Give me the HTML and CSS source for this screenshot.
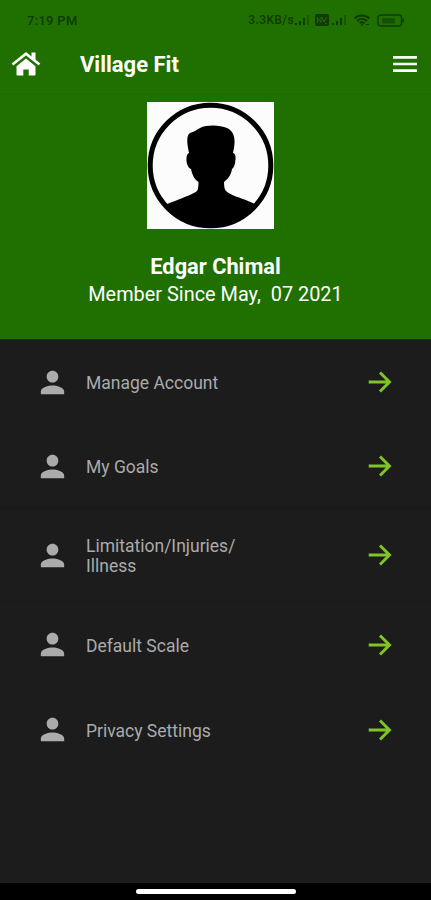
FILE: index.html
```html
<!DOCTYPE html>
<html lang="en">

<head>
    <meta charset="UTF-8">
    <meta name="viewport" content="width=device-width, initial-scale=1.0">
    <title>Village Fit</title>
    <link rel="stylesheet" href="styles.css">
</head>

<body>
    <!-- Shared icons -->
    <svg class="sprite" width="0" height="0">
        <symbol id="person" viewBox="0 0 24 24">
            <path d="M12 12c2.21 0 4-1.79 4-4s-1.79-4-4-4-4 1.79-4 4 1.79 4 4 4zm0 2c-2.67 0-8 1.34-8 4v2h16v-2c0-2.66-5.33-4-8-4z"/>
        </symbol>
        <symbol id="arrow" viewBox="0 0 24 24">
            <path d="M4 12h14.500M12 5.300l6.700 6.700-6.700 6.700" fill="none" stroke="currentColor" stroke-width="2.100"/>
        </symbol>
        <symbol id="signal" viewBox="0 0 16 12">
            <path d="M1 9h2v2H1zM5 7h2v4H5zM9 4h2v7H9z"/>
            <path d="M13 1h2v10h-2z" opacity="0.45"/>
        </symbol>
    </svg>

    <div class="screen">
        <header class="top">
            <div class="status">
                <span class="time">7:19 PM</span>
                <div class="status-icons">
                    <span class="speed">3.3KB/s</span>
                    <svg class="signal" width="16" height="12"><use href="#signal"/></svg>
                    <svg class="volte" width="14" height="12" viewBox="0 0 14 12">
                        <rect width="14" height="12" rx="2" fill="currentColor"/>
                        <path d="M2.500 9V3.500L6 8.500V3M7 3l2 5 2.500-5M10 9.500h2" fill="none" stroke="#1f7000" stroke-width="1"/>
                    </svg>
                    <svg class="signal two" width="16" height="12"><use href="#signal"/></svg>
                    <svg class="wifi" width="18" height="13" viewBox="0 0 18 13" stroke="currentColor" stroke-width="1.900">
                        <path d="M1.500 4.500c4-4 11-4 15 0M4 7c3-2.700 7-2.700 10 0M6.500 9.300c1.500-1.300 3.500-1.300 5 0"/>
                        <path d="M7.500 10.300h3L9 12.300z" fill="currentColor" stroke="none"/>
                        <path d="M13 10.500h3" stroke-width="1"/>
                    </svg>
                    <svg class="battery" width="28" height="13" viewBox="0 0 28 13">
                        <rect x="1" y="1" width="23.500" height="11" rx="2.500" fill="none" stroke="currentColor" stroke-width="1.300"/>
                        <rect x="5" y="4" width="13" height="5.500" opacity="0.6"/>
                        <path d="M25.500 4.500h1.500v4h-1.500z"/>
                    </svg>
                </div>
            </div>

            <nav class="navbar">
                <svg class="home" width="30" height="26" viewBox="0 0 30 26">
                    <path d="M15 7.500L5.500 15.200V23.500c0 .6.400 1 1 1H12.300v-6h5.400v6H23.500c.6 0 1-.4 1-1v-8.300z"/>
                    <path d="M1.500 13.500L15 2.700l13.500 10.800" fill="none" stroke="currentColor" stroke-width="2.700"/>
                    <path d="M20.500 1.500h4v9l-4-3.200z"/>
                </svg>
                <h1>Village Fit</h1>
                <svg class="menu" width="32" height="32" viewBox="0 0 24 24">
                    <path d="M3 18h18v-2H3v2zm0-5h18v-2H3v2zm0-7v2h18V6H3z"/>
                </svg>
            </nav>

            <div class="profile">
                <svg class="avatar" width="127" height="127" viewBox="0 0 127 127">
                    <defs>
                        <clipPath id="ring"><circle cx="63.500" cy="63.500" r="62"/></clipPath>
                    </defs>
                    <rect width="127" height="127" fill="#fcfcfc"/>
                    <g clip-path="url(#ring)" fill="#000">
                        <path d="M0 127V111C15 104 20 102 28 99C38 95 46 92 50 89Q51.500 87 51.500 80C47 77 45 72 44 67C41 66 39 61 39.500 56Q39.500 52 42 51C40 41 39 34 43 31C47 30 49 28 53 26C60 22.500 73 23 80 26C88 30 89 38 86 51Q89 52 88.500 57Q88 65 85 67C84 73 81 77 77 80Q77 87 79 89C83 93 94 96 101 99C110 103 117 106 127 111V127z"/>
                    </g>
                    <circle cx="63.500" cy="63.500" r="60.300" fill="none" stroke="#000" stroke-width="5"/>
                </svg>
                <h2>Edgar Chimal</h2>
                <p>Member Since May,&nbsp; 07 2021</p>
            </div>
        </header>

        <main class="options">
            <div class="option">
                <svg class="person"><use href="#person"/></svg>
                <span class="label">Manage Account</span>
                <svg class="arrow"><use href="#arrow"/></svg>
            </div>
            <div class="option">
                <svg class="person"><use href="#person"/></svg>
                <span class="label">My Goals</span>
                <svg class="arrow"><use href="#arrow"/></svg>
            </div>
            <div class="option tall">
                <svg class="person"><use href="#person"/></svg>
                <span class="label">Limitation/Injuries/<br>Illness</span>
                <svg class="arrow"><use href="#arrow"/></svg>
            </div>
            <div class="option">
                <svg class="person"><use href="#person"/></svg>
                <span class="label">Default Scale</span>
                <svg class="arrow"><use href="#arrow"/></svg>
            </div>
            <div class="option">
                <svg class="person"><use href="#person"/></svg>
                <span class="label">Privacy Settings</span>
                <svg class="arrow"><use href="#arrow"/></svg>
            </div>
        </main>

        <footer class="gesture">
            <div class="pill"></div>
        </footer>
    </div>
</body>

</html>
```
FILE: styles.css
```css
* {
    box-sizing: border-box;
}

body {
    margin: 0;
    font-family: Roboto, sans-serif;
    background-color: #1c1c1c;
}

h1, h2, p {
    margin: 0;
}

svg {
    display: block;
    flex-shrink: 0;
    fill: currentColor;
}

.sprite {
    position: absolute;
}

.screen {
    height: 900px;
    display: flex;
    flex-direction: column;
    overflow: hidden;
}

.top {
    height: 340px;
    background-color: #1f7000;
    border-bottom: 1px solid #16330a;
    color: #fff;
}

/* Status bar */
.status {
    height: 40px;
    padding: 0 26px 0 27px;
    display: flex;
    justify-content: space-between;
    align-items: center;
    color: #113a06;
}

.time {
    font-size: 13px;
    font-weight: 500;
    letter-spacing: 0.3px;
}

.status-icons {
    display: flex;
    align-items: center;
}

.speed {
    font-size: 12px;
    font-weight: 500;
    letter-spacing: 0.4px;
}

.volte {
    margin-left: 5px;
}

.signal.two {
    margin-left: 2px;
}

.wifi {
    margin-left: 6px;
    fill: none;
}

.battery {
    margin-left: 6px;
}

/* App bar */
.navbar {
    height: 54px;
    padding: 0 10px 6px 11px;
    display: flex;
    align-items: center;
    border-bottom: 1px solid #1d6902;
}

.navbar h1 {
    flex: 1;
    margin-left: 39px;
    padding-top: 2px;
    font-size: 22px;
    font-weight: 700;
}

.profile {
    padding: 8px 11px 0 0;
    display: flex;
    flex-direction: column;
    align-items: center;
}

.profile h2 {
    margin-top: 24px;
    padding-left: 11px;
    font-size: 21.8px;
    line-height: 28px;
}

.profile p {
    padding-left: 11px;
    font-size: 19.9px;
    line-height: 28px;
}

/* Options list */
.options {
    flex: 1;
    background-color: #1c1c1c;
}

.option {
    height: 85px;
    padding: 0 34px 0 35px;
    display: flex;
    align-items: center;
    color: #ababab;
}

.option:nth-child(2),
.option.tall {
    border-bottom: 1px solid #191919;
}

.option:first-child {
    height: 84px;
}

.option.tall {
    height: 93px;
}

.person {
    width: 35px;
    height: 35px;
}

.label {
    flex: 1;
    margin-left: 16px;
    padding-top: 2px;
    font-size: 17.5px;
    line-height: 20px;
}

.arrow {
    width: 34px;
    height: 34px;
    color: #7fc526;
}

.gesture {
    height: 17px;
    display: flex;
    justify-content: center;
    align-items: center;
    background-color: #000;
}

.pill {
    width: 160px;
    height: 5px;
    border-radius: 3px;
    background-color: #fff;
}
```
